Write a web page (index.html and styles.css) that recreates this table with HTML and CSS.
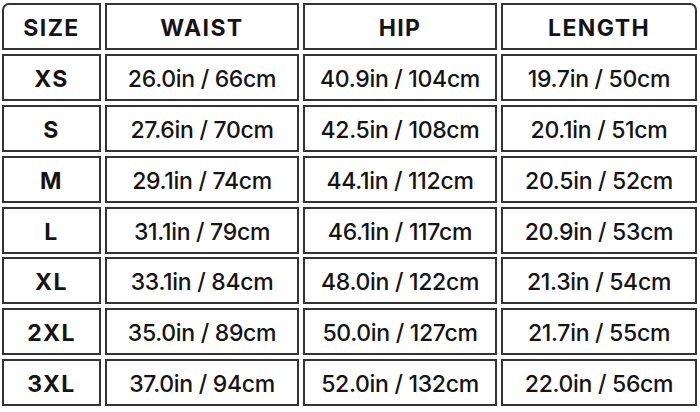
FILE: index.html
```html
<!DOCTYPE html>
<html lang="en">
<head>
<meta charset="utf-8">
<title>Size chart</title>
<link rel="stylesheet" href="styles.css">
</head>
<body>
<div class="chart">
  <div class="cell head tl">SIZE</div>
  <div class="cell head">WAIST</div>
  <div class="cell head">HIP</div>
  <div class="cell head tr">LENGTH</div>

  <div class="cell size">XS</div>
  <div class="cell">26.0in / 66cm</div>
  <div class="cell">40.9in / 104cm</div>
  <div class="cell">19.7in / 50cm</div>

  <div class="cell size">S</div>
  <div class="cell">27.6in / 70cm</div>
  <div class="cell">42.5in / 108cm</div>
  <div class="cell">20.1in / 51cm</div>

  <div class="cell size">M</div>
  <div class="cell">29.1in / 74cm</div>
  <div class="cell">44.1in / 112cm</div>
  <div class="cell">20.5in / 52cm</div>

  <div class="cell size">L</div>
  <div class="cell">31.1in / 79cm</div>
  <div class="cell">46.1in / 117cm</div>
  <div class="cell">20.9in / 53cm</div>

  <div class="cell size">XL</div>
  <div class="cell">33.1in / 84cm</div>
  <div class="cell">48.0in / 122cm</div>
  <div class="cell">21.3in / 54cm</div>

  <div class="cell size">2XL</div>
  <div class="cell">35.0in / 89cm</div>
  <div class="cell">50.0in / 127cm</div>
  <div class="cell">21.7in / 55cm</div>

  <div class="cell size">3XL</div>
  <div class="cell">37.0in / 94cm</div>
  <div class="cell">52.0in / 132cm</div>
  <div class="cell">22.0in / 56cm</div>
</div>
</body>
</html>
```
FILE: styles.css
```css
html, body {
  margin: 0;
  padding: 0;
  background: #ffffff;
}

body {
  font-family: Inter, "Open Sans", "Liberation Sans", sans-serif;
  color: #141414;
}

.chart {
  display: grid;
  grid-template-columns: 99px 194px 194px 196px;
  grid-auto-rows: 47px;
  column-gap: 4px;
  row-gap: 3.9px;
  padding: 3px 0 0 2px;
}

.cell {
  box-sizing: border-box;
  border: 2px solid #333333;
  display: flex;
  align-items: center;
  justify-content: center;
  padding-top: 3px;
  font-size: 23px;
  font-weight: 500;
  letter-spacing: -0.3px;
  white-space: nowrap;
}

.head,
.size {
  font-weight: 700;
  font-size: 23px;
  letter-spacing: 1.4px;
}

.tl {
  border-top-left-radius: 7px;
}

.tr {
  border-top-right-radius: 7px;
}
```
